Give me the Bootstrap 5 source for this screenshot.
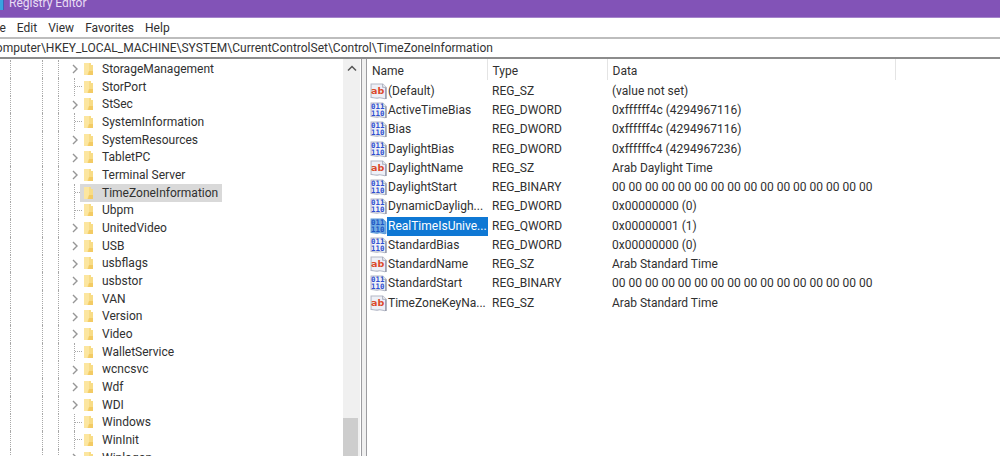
<!DOCTYPE html>
<html lang="en">
<head>
<meta charset="utf-8">
<meta name="viewport" content="width=device-width, initial-scale=1">
<title>Registry Editor</title>
<link href="https://cdn.jsdelivr.net/npm/bootstrap@5.3.0/dist/css/bootstrap.min.css" rel="stylesheet">
<style>
  body { font: 12px/18px Roboto, "Open Sans", sans-serif; color: #303030; background: #fff; }
  .titlebar { height: 18px; background: #8253b7; border-bottom: 1px solid #a585cb; color: #e9ddf5; }
  .titlebar h1 { font-size: 12px; line-height: 16px; margin: -5px 0 0 5px; }
  .app-icon { width: 4px; height: 10px; background: #38a3e0; border-right: 1px solid #3c62b4; }
  .menubar { height: 19px; margin-left: -13px; gap: 11px; }
  .menubar button { color: #303030; line-height: 20px; }
  .address { height: 22px; border-top: 2px solid #bdbdbd; border-bottom: 2px solid #8c8c8c; }
  .address input { font: inherit; color: #333; margin-left: -12px; outline: 0; }
  .tree-pane { flex: 0 0 362px; border-right: 1px solid #9c9ca0; }
  .splitter { flex: 0 0 4px; background: #f0f0f0; }
  .list-pane { border-left: 1px solid #9c9ca0; }

  .tree { padding: 1px 0 0; }
  .tree li { height: 18px; line-height: 18px; }
  .tree li:nth-child(3n) { height: 17px; line-height: 17px; }
  .guide { flex: none; border-left: 1px dotted #a8a8a8; }
  .g1 { width: 32px; margin-left: 10px; }
  .g2 { width: 16px; }
  .g3 { width: 12px; }
  .twig { width: 14px; flex: none; }
  .twig.leaf { width: 10px; margin-left: 4px; border-left: 1px dotted #a8a8a8; }
  .twig.leaf::before { content: ""; display: block; width: 7px; height: 9px; border-bottom: 1px dotted #a8a8a8; }
  .node { padding: 0 4px; gap: 8px; margin-left: -4px; }
  .chosen { background: #d9d9d9; }
  .twig svg, .node svg, .kind { display: block; flex: none; }

  .scroll { flex: 0 0 17px; background: #f0f0f0; margin-right: 1px; }
  .scroll svg { margin: 6px 0 0 4px; }
  .thumb { height: 38px; margin-right: 2px; background: #cdcdcd; }

  .values { table-layout: fixed; width: 529px; }
  .values th { height: 20px; padding: 3px 0 0 5px; font-weight: 400; border-right: 1px solid #e4e4e4; line-height: 18px; }
  .values tbody::before { content: ""; display: block; height: 2px; }
  .values td { height: 19px; line-height: 19px; padding: 0 0 0 5px; white-space: nowrap; }
  .values tbody tr:nth-child(4n) td { height: 20px; }
  .values td:first-child { padding-left: 3px; }
  .label { padding: 0 1px; }
  .picked .label { background: #0f78d4; color: #fff; }
</style>
</head>
<body>
<svg width="0" height="0" class="position-absolute" aria-hidden="true">
  <defs>
    <symbol id="paper" viewBox="0 0 16 16">
      <path d="M1 1h11l3 3v10.500c-2 1.200-4-1.500-7-.5-3 .9-5-.5-7-.5z" fill="#eef0f7" stroke="#b4b8c6" stroke-width="1"/>
      <path d="M15 4v11" stroke="#83879a"/>
      <path d="M12 1v3h3" fill="#fff" stroke="#a4a8b8"/>
    </symbol>
    <symbol id="sz" viewBox="0 0 16 16">
      <use href="#paper"/>
      <text x="1" y="10" font-family="DejaVu Sans" font-weight="700" font-size="9" fill="#dc4a2c">ab</text>
    </symbol>
    <symbol id="bin" viewBox="0 0 16 16">
      <use href="#paper"/>
      <g font-family="DejaVu Sans Mono" font-weight="700" font-size="7" fill="#2f4fd0">
        <text x="1" y="7">011</text><text x="1" y="13">110</text>
      </g>
    </symbol>
    <symbol id="bin-picked" viewBox="0 0 16 16">
      <path d="M1 1h11l3 3v10.500c-2 1.200-4-1.500-7-.5-3 .9-5-.5-7-.5z" fill="#6fa9e2" stroke="#5b98d6"/>
      <g font-family="DejaVu Sans Mono" font-weight="700" font-size="7" fill="#1c55c4">
        <text x="1" y="7">011</text><text x="1" y="13">110</text>
      </g>
    </symbol>
    <symbol id="folder" viewBox="0 0 10 13">
      <path d="M0 0h7v2h2v10H0z" fill="#f8dc86"/>
      <path d="M0 0h5v8l-2 4H0z" fill="#fce6a0"/>
      <path d="M5 8h4v4H4z" fill="#f3cb64"/>
    </symbol>
    <symbol id="chevron" viewBox="0 0 10 10">
      <path d="M3 1l4 4-4 4" fill="none" stroke="#969696" stroke-width="1.400"/>
    </symbol>
  </defs>
</svg>

<div class="d-flex flex-column vh-100 overflow-hidden">
  <header class="titlebar d-flex overflow-hidden flex-shrink-0">
    <span class="app-icon"></span>
    <h1 class="fw-normal">Registry Editor</h1>
  </header>
  <nav class="menubar d-flex flex-shrink-0" aria-label="Menu">
    <button class="border-0 bg-transparent p-0">File</button>
    <button class="border-0 bg-transparent p-0">Edit</button>
    <button class="border-0 bg-transparent p-0">View</button>
    <button class="border-0 bg-transparent p-0">Favorites</button>
    <button class="border-0 bg-transparent p-0">Help</button>
  </nav>
  <div class="address d-flex flex-shrink-0 overflow-hidden">
    <input class="border-0 p-0 flex-grow-1" aria-label="Address" value="Computer\HKEY_LOCAL_MACHINE\SYSTEM\CurrentControlSet\Control\TimeZoneInformation">
  </div>
  <main class="d-flex flex-grow-1 overflow-hidden">
    <section class="tree-pane d-flex overflow-hidden">
      <ul class="tree list-unstyled mb-0 flex-grow-1" id="tree"></ul>
      <div class="scroll d-flex flex-column justify-content-between">
        <svg width="10" height="7" viewBox="0 0 10 7"><path d="M1 5.500l4-4 4 4" fill="none" stroke="#555" stroke-width="1.500"/></svg>
        <div class="thumb"></div>
      </div>
    </section>
    <div class="splitter"></div>
    <section class="list-pane flex-grow-1 overflow-hidden">
      <table class="values">
        <colgroup><col style="width:120px"><col style="width:120px"><col></colgroup>
        <thead><tr><th>Name</th><th>Type</th><th>Data</th></tr></thead>
        <tbody id="values"></tbody>
      </table>
    </section>
  </main>
</div>

<script>
  // A leading "+" marks a key that has subkeys.
  const keys = ['+StorageManagement', 'StorPort', '+StSec', 'SystemInformation', '+SystemResources',
    '+TabletPC', '+Terminal Server', 'TimeZoneInformation', 'Ubpm', '+UnitedVideo', '+USB', '+usbflags',
    '+usbstor', '+VAN', '+Version', '+Video', 'WalletService', '+wcncsvc', '+Wdf', '+WDI', 'Windows',
    'WinInit', '+Winlogon'];
  document.getElementById('tree').innerHTML = keys.map(k => {
    const open = k[0] === '+', name = k.replace('+', '');
    const twig = open
      ? `<button class="twig border-0 bg-transparent p-0" aria-label="Expand ${name}"><svg width="10" height="10"><use href="#chevron"/></svg></button>`
      : '<span class="twig leaf"></span>';
    return `<li class="d-flex"><span class="guide g1"></span><span class="guide g2"></span><span class="guide g3"></span>${twig}` +
      `<span class="node d-flex align-items-center ${name === 'TimeZoneInformation' ? 'chosen' : ''}">` +
      `<svg width="10" height="13"><use href="#folder"/></svg>${name}</span></li>`;
  }).join('');

  const zeros = Array(16).fill('00').join(' ');
  const values = [
    ['(Default)', 'REG_SZ', '(value not set)'],
    ['ActiveTimeBias', 'REG_DWORD', '0xffffff4c (4294967116)'],
    ['Bias', 'REG_DWORD', '0xffffff4c (4294967116)'],
    ['DaylightBias', 'REG_DWORD', '0xffffffc4 (4294967236)'],
    ['DaylightName', 'REG_SZ', 'Arab Daylight Time'],
    ['DaylightStart', 'REG_BINARY', zeros],
    ['DynamicDayligh...', 'REG_DWORD', '0x00000000 (0)'],
    ['RealTimeIsUnive...', 'REG_QWORD', '0x00000001 (1)'],
    ['StandardBias', 'REG_DWORD', '0x00000000 (0)'],
    ['StandardName', 'REG_SZ', 'Arab Standard Time'],
    ['StandardStart', 'REG_BINARY', zeros],
    ['TimeZoneKeyNa...', 'REG_SZ', 'Arab Standard Time']];
  const iconFor = type => type === 'REG_SZ' ? 'sz' : type === 'REG_QWORD' ? 'bin-picked' : 'bin';
  document.getElementById('values').innerHTML = values.map(([n, t, d]) =>
    `<tr class="${t === 'REG_QWORD' ? 'picked' : ''}"><td><span class="d-flex align-items-center">` +
    `<svg class="kind" width="17" height="17"><use href="#${iconFor(t)}"/></svg>` +
    `<span class="label flex-grow-1">${n}</span></span></td><td>${t}</td><td>${d}</td></tr>`).join('');
</script>
<script src="https://cdn.jsdelivr.net/npm/bootstrap@5.3.0/dist/js/bootstrap.bundle.min.js"></script>
</body>
</html>
